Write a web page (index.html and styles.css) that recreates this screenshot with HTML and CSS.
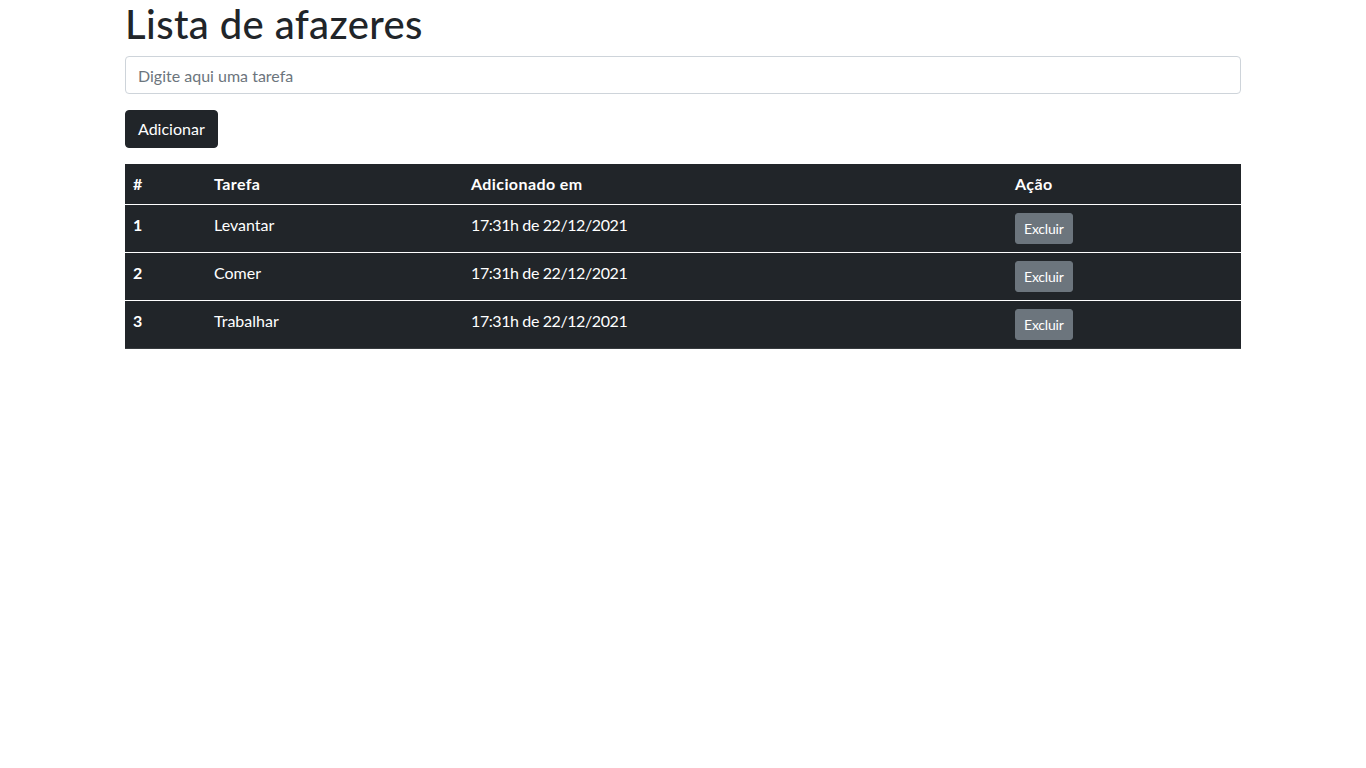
FILE: index.html
```html
<!DOCTYPE html>
<html lang="pt-BR">
<head>
<meta charset="utf-8">
<title>Lista de afazeres</title>
<link rel="stylesheet" href="styles.css">
</head>
<body>
<div class="container">
  <h1 class="title">Lista de afazeres</h1>
  <input class="task-input" type="text" placeholder="Digite aqui uma tarefa">
  <button class="btn-add" type="button">Adicionar</button>
  <table class="tasks">
    <thead>
      <tr>
        <th class="col-num">#</th>
        <th class="col-task">Tarefa</th>
        <th class="col-date">Adicionado em</th>
        <th class="col-action">Ação</th>
      </tr>
    </thead>
    <tbody>
      <tr>
        <th>1</th>
        <td>Levantar</td>
        <td class="date">17:31h de 22/12/2021</td>
        <td><button class="btn-del" type="button">Excluir</button></td>
      </tr>
      <tr>
        <th>2</th>
        <td>Comer</td>
        <td class="date">17:31h de 22/12/2021</td>
        <td><button class="btn-del" type="button">Excluir</button></td>
      </tr>
      <tr>
        <th>3</th>
        <td>Trabalhar</td>
        <td class="date">17:31h de 22/12/2021</td>
        <td><button class="btn-del" type="button">Excluir</button></td>
      </tr>
    </tbody>
  </table>
</div>
</body>
</html>
```
FILE: styles.css
```css
* { box-sizing: border-box; }
body {
  margin: 0;
  font-family: "Segoe UI", Lato, "Liberation Sans", sans-serif;
  font-size: 16px;
  line-height: 1.5;
  color: #212529;
  background: #fff;
}
.container {
  width: 1140px;
  margin: 0 auto;
  padding: 0 12px;
}
.title {
  margin: 0 0 8px;
  font-size: 40px;
  font-weight: 500;
  line-height: 1.2;
  letter-spacing: 0.4px;
}
.task-input {
  display: block;
  width: 100%;
  height: 38px;
  padding: 6px 12px;
  font: inherit;
  color: #212529;
  border: 1px solid #ced4da;
  border-radius: 4px;
  margin: 0 0 16px;
}
.task-input::placeholder { color: #6c757d; }
.btn-add {
  display: block;
  height: 38px;
  padding: 6px 12px;
  font: inherit;
  color: #fff;
  background: #212529;
  border: 1px solid #212529;
  border-radius: 4px;
  margin: 0 0 16px;
}
.tasks {
  width: 100%;
  border-collapse: collapse;
  background: #212529;
  color: #fff;
}
.tasks th, .tasks td {
  padding: 8px;
  text-align: left;
  vertical-align: top;
  border-bottom: 1px solid #fff;
}
.tasks th { font-weight: 700; letter-spacing: 0.4px; }
.tasks td { font-weight: 400; }
.tasks td.date { letter-spacing: -0.4px; }
.tasks tbody tr:last-child > * { border-bottom-color: #373b3e; }
.col-num { width: 81px; }
.col-task { width: 257px; }
.col-date { width: 544px; }
.btn-del {
  height: 31px;
  padding: 4px 8px;
  font: inherit;
  font-size: 14px;
  line-height: 1.5;
  letter-spacing: -0.2px;
  color: #fff;
  background: #6c757d;
  border: 1px solid #6c757d;
  border-radius: 3px;
}
```
